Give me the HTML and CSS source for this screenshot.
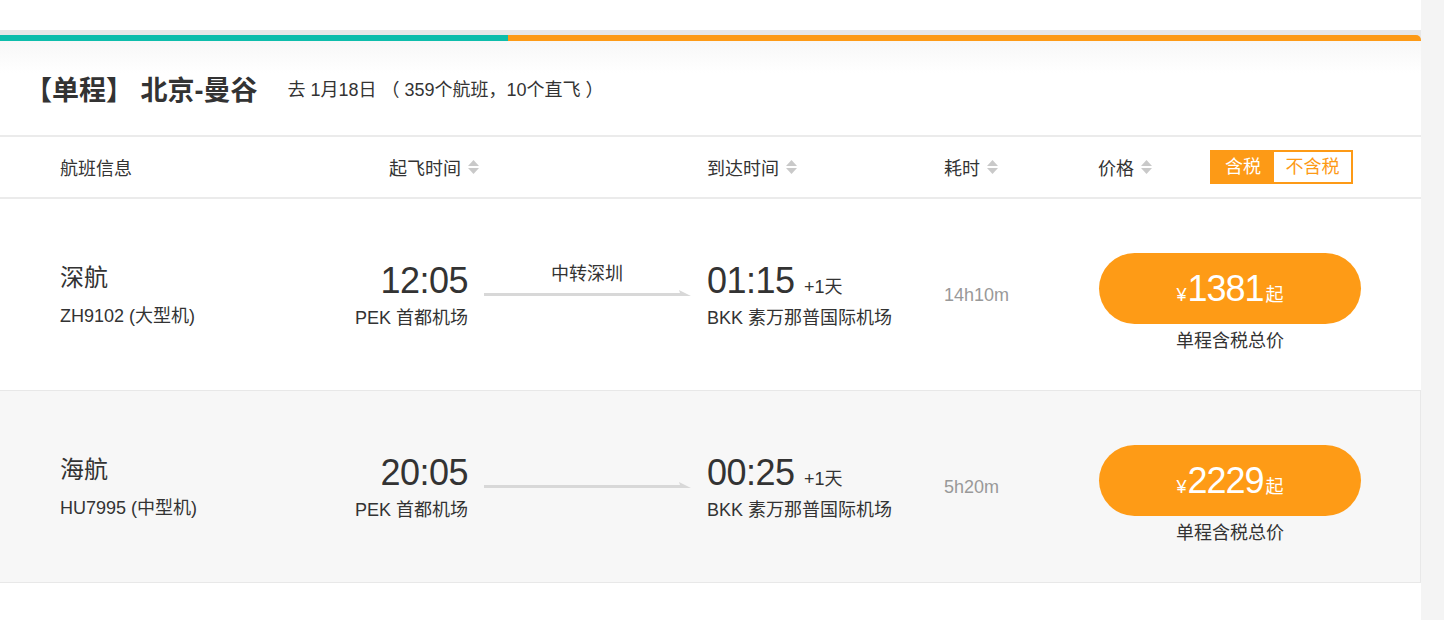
FILE: index.html
```html
<!DOCTYPE html>
<html lang="zh-CN">
<head>
  <meta charset="UTF-8">
  <title>北京-曼谷 航班列表</title>
  <link rel="stylesheet" href="styles.css">
</head>
<body>
  <div class="page">
    <div class="main">
      <!-- top strip -->
      <div class="topGap"></div>
      <div class="progressBar">
        <div class="progressDone"></div>
        <div class="progressLeft"></div>
      </div>

      <!-- Title -->
      <div class="titleRow">
        <h1 class="routeTitle">【单程】 北京-曼谷</h1>
        <span class="routeInfo">去 1月18日 （ 359个航班，10个直飞 ）</span>
      </div>

      <!-- Sort header -->
      <div class="sortHeader">
        <div class="hInfo">航班信息</div>
        <div class="hDepart">起飞时间 <span class="sortIcon"><svg width="11" height="14" viewBox="0 0 11 14"><polygon points="5.5,0 11,6 0,6" /><polygon points="0,8 11,8 5.5,14" /></svg></span></div>
        <div class="hArrive">到达时间 <span class="sortIcon"><svg width="11" height="14" viewBox="0 0 11 14"><polygon points="5.5,0 11,6 0,6" /><polygon points="0,8 11,8 5.5,14" /></svg></span></div>
        <div class="hDuration">耗时 <span class="sortIcon"><svg width="11" height="14" viewBox="0 0 11 14"><polygon points="5.5,0 11,6 0,6" /><polygon points="0,8 11,8 5.5,14" /></svg></span></div>
        <div class="hPrice">价格 <span class="sortIcon"><svg width="11" height="14" viewBox="0 0 11 14"><polygon points="5.5,0 11,6 0,6" /><polygon points="0,8 11,8 5.5,14" /></svg></span></div>
        <div class="taxToggle">
          <span class="taxOn">含税</span>
          <span class="taxOff">不含税</span>
        </div>
      </div>

      <!-- Flight rows -->
      <div class="flightRow">
        <div class="airline">
          <div class="airlineName">深航</div>
          <div class="flightNo">ZH9102 (大型机)</div>
        </div>
        <div class="depart">
          <div class="time">12:05</div>
          <div class="airport">PEK 首都机场</div>
        </div>
        <div class="route">
          <div class="transfer">中转深圳</div>
          <svg class="routeLine" width="207" height="8" viewBox="0 0 207 8"><polygon points="0,5 196,5 195,2 207,8 0,8" /></svg>
        </div>
        <div class="arrive">
          <div class="time">01:15 <span class="nextDay">+1天</span></div>
          <div class="airport">BKK 素万那普国际机场</div>
        </div>
        <div class="duration">14h10m</div>
        <div class="price">
          <div class="priceBtn"><span class="yen">¥</span><span class="amount">1381</span><span class="from">起</span></div>
          <div class="priceNote">单程含税总价</div>
        </div>
      </div>

      <div class="flightRow alt">
        <div class="airline">
          <div class="airlineName">海航</div>
          <div class="flightNo">HU7995 (中型机)</div>
        </div>
        <div class="depart">
          <div class="time">20:05</div>
          <div class="airport">PEK 首都机场</div>
        </div>
        <div class="route">
          <div class="transfer"></div>
          <svg class="routeLine" width="207" height="8" viewBox="0 0 207 8"><polygon points="0,5 196,5 195,2 207,8 0,8" /></svg>
        </div>
        <div class="arrive">
          <div class="time">00:25 <span class="nextDay">+1天</span></div>
          <div class="airport">BKK 素万那普国际机场</div>
        </div>
        <div class="duration">5h20m</div>
        <div class="price">
          <div class="priceBtn"><span class="yen">¥</span><span class="amount">2229</span><span class="from">起</span></div>
          <div class="priceNote">单程含税总价</div>
        </div>
      </div>
    </div>
    <div class="sideGutter"></div>
  </div>
</body>
</html>
```

FILE: styles.css
```css
body {
  margin: 0;
  padding: 0;
  background-color: #fff;
  color: #333;
  font-family: "Liberation Sans", "Noto Sans CJK SC", sans-serif;
  font-size: 18px;
}

.page {
  display: flex;
  height: 620px;
  overflow: hidden;
}

.main {
  width: 1421px;
  flex-shrink: 0;
}

.sideGutter {
  flex: 1;
  background-color: #f4f4f4;
}


/* top strip */
.topGap {
  height: 30px;
  background-color: #fff;
  border-bottom: 5px solid #e7e7e7;
}

.progressBar {
  display: flex;
  height: 6px;
  background-color: #e7e7e7;
}

.progressDone {
  width: 508px;
  background-color: #0dbdab;
}

.progressLeft {
  flex: 1;
  background-color: #fd9a16;
  border-top-right-radius: 5px;
}


/* title */
.titleRow {
  display: flex;
  align-items: center;
  height: 94px;
  padding-left: 25px;
  background: linear-gradient(#f7f7f7, #fff 32px);
  border-bottom: 2px solid #ebebeb;
}

.routeTitle {
  margin: 0;
  font-size: 27px;
  font-weight: bold;
  color: #333;
}

.routeInfo {
  margin-left: 30px;
  font-size: 18px;
}


/* sort header */
.sortHeader {
  display: flex;
  align-items: center;
  height: 60px;
  border-bottom: 2px solid #ebebeb;
}

.sortHeader > div {
  display: flex;
  align-items: center;
}

.hInfo {
  width: 329px;
  padding-left: 60px;
}

.hDepart {
  width: 318px;
}

.hArrive {
  width: 237px;
}

.hDuration {
  width: 154px;
}

.hPrice {
  width: 112px;
}

.sortIcon {
  display: inline-flex;
  margin-left: 7px;
}

.sortIcon svg {
  fill: #c9c9c9;
}

.taxToggle {
  display: flex;
  border: 2px solid #fd9a16;
  height: 30px;
}

.taxToggle span {
  display: flex;
  align-items: center;
  justify-content: center;
  line-height: 30px;
}

.taxOn {
  width: 62px;
  background-color: #fd9a16;
  color: #fff;
}

.taxOff {
  width: 77px;
  color: #fd9a16;
}


/* flight rows */
.flightRow {
  display: grid;
  grid-template-columns: 240px 168px 239px 237px 155px 262px;
  align-items: center;
  height: 191px;
  padding-left: 60px;
  border-bottom: 1px solid #e8e8e8;
}

.flightRow.alt {
  background-color: #f7f7f7;
  border-right: 1px solid #e8e8e8;
}

.airlineName {
  font-size: 24px;
  line-height: 32px;
}

.flightNo {
  margin-top: 11px;
  line-height: 22px;
}

.depart {
  text-align: right;
}

.time {
  font-size: 36px;
  line-height: 40px;
  letter-spacing: -0.5px;
}

.airport {
  margin-top: 6px;
  line-height: 22px;
}

.nextDay {
  font-size: 18px;
  line-height: 1;
  letter-spacing: 0;
}

.route {
  padding: 0 17px 30px 16px;
}

.transfer {
  height: 22px;
  line-height: 22px;
  text-align: center;
  margin-bottom: 3px;
}

.routeLine {
  display: block;
  fill: #d8d8d8;
}

.duration {
  color: #999;
  line-height: 22px;
}

.price {
  margin-top: 15px;
  text-align: center;
}

.priceBtn {
  display: flex;
  align-items: baseline;
  justify-content: center;
  height: 71px;
  line-height: 71px;
  border-radius: 36px;
  background-color: #fe9b16;
  color: #fff;
}

.yen {
  font-size: 18px;
  margin-right: 1px;
}

.amount {
  font-size: 36px;
  letter-spacing: -1px;
}

.from {
  font-size: 18px;
  margin-left: 2px;
}

.priceNote {
  margin-top: 6px;
  line-height: 22px;
}
```
